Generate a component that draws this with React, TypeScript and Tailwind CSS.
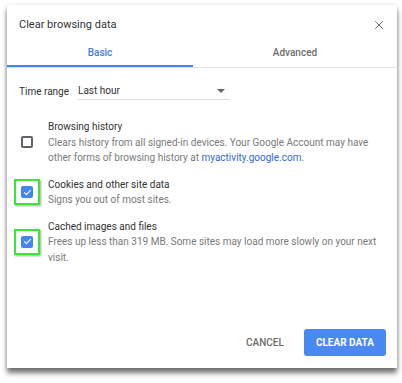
import { X } from "lucide-react";

function Check({ checked }: { checked: boolean }) {
  if (!checked) {
    return <div className="w-[12px] h-[12px] rounded-[2px] border-2 border-[#5f6368]" />;
  }
  return (
    <div className="w-[12px] h-[12px] rounded-[2px] bg-[#4285f4] flex items-center justify-center">
      <svg width="9" height="9" viewBox="0 0 24 24" fill="none">
        <path d="M4 12.5l5 5L20 6.5" stroke="white" strokeWidth="3.2" strokeLinecap="round" strokeLinejoin="round" />
      </svg>
    </div>
  );
}

function Option({
  title,
  checked,
  highlight,
  children,
}: {
  title: string;
  checked: boolean;
  highlight?: boolean;
  children: React.ReactNode;
}) {
  return (
    <div className="flex items-center">
      <div className="w-[41px] shrink-0 flex items-center pl-[7px]">
        {highlight ? (
          <div className="border-2 border-[#39e639] p-[5px] shadow-[1px_1px_2px_rgba(0,0,0,0.35)]">
            <Check checked={checked} />
          </div>
        ) : (
          <div className="p-[7px]">
            <Check checked={checked} />
          </div>
        )}
      </div>
      <div className="text-[10px] leading-[15.5px]">
        <div className="text-[#333333]">{title}</div>
        <div className="text-[#7a7a7a] pr-[16px]">{children}</div>
      </div>
    </div>
  );
}

export default function App() {
  return (
    <div className="w-[402px] h-[383px] bg-white pt-[5px] pl-[7px]" style={{ fontFamily: "Roboto, 'Noto Sans', sans-serif" }}>
      <div className="w-[390px] h-[363px] bg-white shadow-[0_5px_5px_rgba(0,0,0,0.55),0_0_3px_rgba(0,0,0,0.12)] flex flex-col">
        <div className="flex items-center justify-between h-[34px] pl-[12px] pr-[11px] pt-[6px]">
          <span className="text-[11px] text-[#333333]">Clear browsing data</span>
          <X size={14} strokeWidth={1.6} className="text-[#616161]" />
        </div>
        <div className="flex h-[29px] border-b border-[#e3e3e3]">
          <div className="w-[186px] flex items-center justify-center border-b-2 border-[#4285f4] text-[10px] font-medium text-[#3f7be8]">
            Basic
          </div>
          <div className="flex-1 flex items-center justify-center text-[10px] font-medium text-[#6d6d6d] pb-[2px]">
            Advanced
          </div>
        </div>
        <div className="flex items-center pl-[12px] mt-[15px]">
          <span className="text-[10px] text-[#333333] w-[59px]">Time range</span>
          <div className="w-[152px] flex items-center justify-between border-b border-[#dedede] h-[17px] pb-[1px]">
            <span className="text-[10px] text-[#333333]">Last hour</span>
            <svg width="8" height="4" viewBox="0 0 8 4" className="mr-[5px]">
              <path d="M0 0h8L4 4z" fill="#666666" />
            </svg>
          </div>
        </div>
        <div className="mt-[19px] flex flex-col gap-[11px]">
          <Option title="Browsing history" checked={false}>
            Clears history from all signed-in devices. Your Google Account may have other forms of browsing history at{" "}
            <span className="text-[#3367d6]">myactivity.google.com</span>.
          </Option>
          <Option title="Cookies and other site data" checked highlight>
            Signs you out of most sites.
          </Option>
          <Option title="Cached images and files" checked highlight>
            Frees up less than 319 MB. Some sites may load more slowly on your next visit.
          </Option>
        </div>
        <div className="mt-auto flex items-center justify-end gap-[20px] pr-[11px] pb-[12px]">
          <span className="text-[10px] font-medium text-[#6d6d6d]">CANCEL</span>
          <div className="h-[27px] px-[12px] rounded-[3px] bg-[#4a88f2] flex items-center text-[10px] font-bold text-white">
            CLEAR DATA
          </div>
        </div>
      </div>
    </div>
  );
}
